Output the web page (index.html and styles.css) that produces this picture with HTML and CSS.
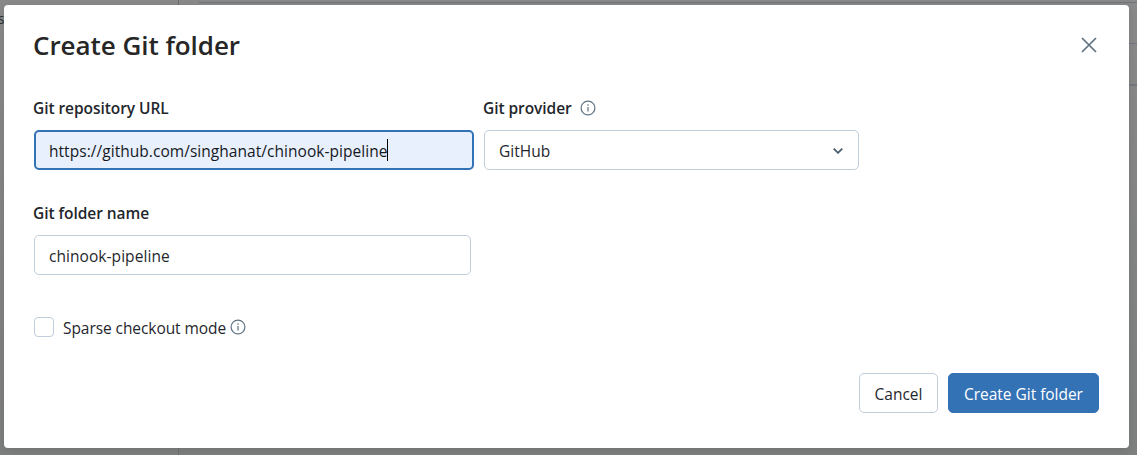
FILE: index.html
```html
<!DOCTYPE html>
<html lang="en">
<head>
<meta charset="utf-8">
<title>Create Git folder</title>
<link rel="stylesheet" href="styles.css">
</head>
<body>
<div class="backdrop">
  <span class="page-text">es</span>
  <span class="page-divider"></span>
  <span class="page-panel"></span>
  <span class="page-row"></span>
</div>
<main class="dialog" role="dialog">
  <header class="dialog-header">
    <h1>Create Git folder</h1>
    <svg class="close" viewBox="0 0 16 16"><path d="M1 1l14 14M15 1L1 15"/></svg>
  </header>
  <div class="row">
    <div class="field url-field">
      <label><span>Git repository URL</span></label>
      <div class="control focused"><span class="url-value">https://github.com/singhanat/chinook-pipeline</span><i class="caret"></i></div>
    </div>
    <div class="field provider-field">
      <label><span>Git provider</span>
        <svg class="info" viewBox="0 0 16 16"><circle cx="8" cy="8" r="6.9"/><path d="M8 7v4.5M8 4.2v1.5"/></svg>
      </label>
      <div class="control select"><span>GitHub</span>
        <svg class="chevron" viewBox="0 0 10 6"><path d="M.7.7L5 4.8 9.3.7"/></svg>
      </div>
    </div>
  </div>
  <div class="field name-field">
    <label><span>Git folder name</span></label>
    <div class="control"><span class="name-value">chinook-pipeline</span></div>
  </div>
  <div class="check-row">
    <span class="checkbox"></span>
    <span class="check-label">Sparse checkout mode</span>
    <svg class="info" viewBox="0 0 16 16"><circle cx="8" cy="8" r="6.9"/><path d="M8 7v4.5M8 4.2v1.5"/></svg>
  </div>
  <footer class="actions">
    <button class="button">Cancel</button>
    <button class="button primary">Create Git folder</button>
  </footer>
</main>
</body>
</html>
```
FILE: styles.css
```css
* { box-sizing: border-box; }
body {
  margin: 0;
  width: 1137px;
  height: 455px;
  padding: 5px 8px 7px 4px;
  overflow: hidden;
  background: #858685;
  color: #1f272d;
  font: 15.5px/20px "Open Sans", "Noto Sans", sans-serif;
}
.backdrop {
  position: absolute;
  inset: 0;
  overflow: hidden;
  background: linear-gradient(#898a89, #7e7f7f);
}
.page-text { position: absolute; left: -10px; top: 9px; font-size: 14px; color: #2b3033; }
.page-divider { position: absolute; left: 178px; top: 0; width: 1px; height: 455px; background: #6a6e74; }
.page-panel { position: absolute; left: 199px; top: 2px; right: 0; height: 1px; background: #6e747c; }
.page-row { position: absolute; left: 1129px; top: 43px; right: 0; height: 43px; border: solid #747880; border-width: 1px 0 2px; }
.dialog {
  position: relative;
  width: 1125px;
  height: 443px;
  padding: 0 30px;
  border-radius: 4px;
  background: #fff;
  box-shadow: 0 2px 10px rgba(0, 0, 0, .12);
}
.dialog-header { display: flex; justify-content: space-between; height: 93px; padding-top: 24px; }
h1 { margin: -1px 0 0 -1px; font-size: 26px; line-height: 34px; font-weight: 600; letter-spacing: -.05px; color: #262626; }
.close { width: 16px; height: 16px; margin: 8px 2px 0 0; }
svg { flex: none; fill: none; stroke: #5f7281; }
.close path { stroke-width: 1.7; }
.row { display: flex; gap: 10px; }
.url-field { width: 440px; }
.provider-field { width: 375px; }
.name-field { width: 437px; margin-top: 33px; }
label { display: flex; align-items: center; gap: 8px; height: 20px; margin-bottom: 12px; font-weight: 600; letter-spacing: -.06px; white-space: nowrap; }
label span { margin-left: -1px; }
.control {
  display: flex;
  align-items: center;
  height: 40px;
  padding: 2px 15px 0 14px;
  border: 1px solid #c0cddb;
  border-radius: 5px;
  white-space: nowrap;
}
.focused { padding: 2px 13px 0; border: 2px solid #3272b5; background: #e8f0fe; color: #15191d; }
.url-value { letter-spacing: .044px; }
.name-value { letter-spacing: .06px; }
.caret { width: 1px; height: 22px; margin-top: -3px; background: #000; }
.select { justify-content: space-between; }
.chevron { width: 10px; height: 6px; margin-top: -1px; stroke: #465b6c; stroke-width: 1.8; }
.info { width: 16px; height: 16px; stroke-width: 1.2; }
.check-row { display: flex; align-items: center; height: 20px; margin-top: 42px; }
.checkbox { width: 20px; height: 20px; margin-right: 9px; border: 1px solid #c0cddb; border-radius: 4px; }
.check-label { padding-top: 2px; letter-spacing: -.07px; }
.check-row .info { margin-left: 4px; }
.actions { display: flex; justify-content: flex-end; gap: 10px; margin-top: 36px; }
.button {
  width: 79px;
  height: 40px;
  padding: 2px 0 0;
  border: 1px solid #c0cddb;
  border-radius: 5px;
  background: #fff;
  color: inherit;
  font: inherit;
  white-space: nowrap;
}
.primary { width: 151px; border-color: #3472b6; background: #3472b6; color: #fff; letter-spacing: -.03px; }
```
